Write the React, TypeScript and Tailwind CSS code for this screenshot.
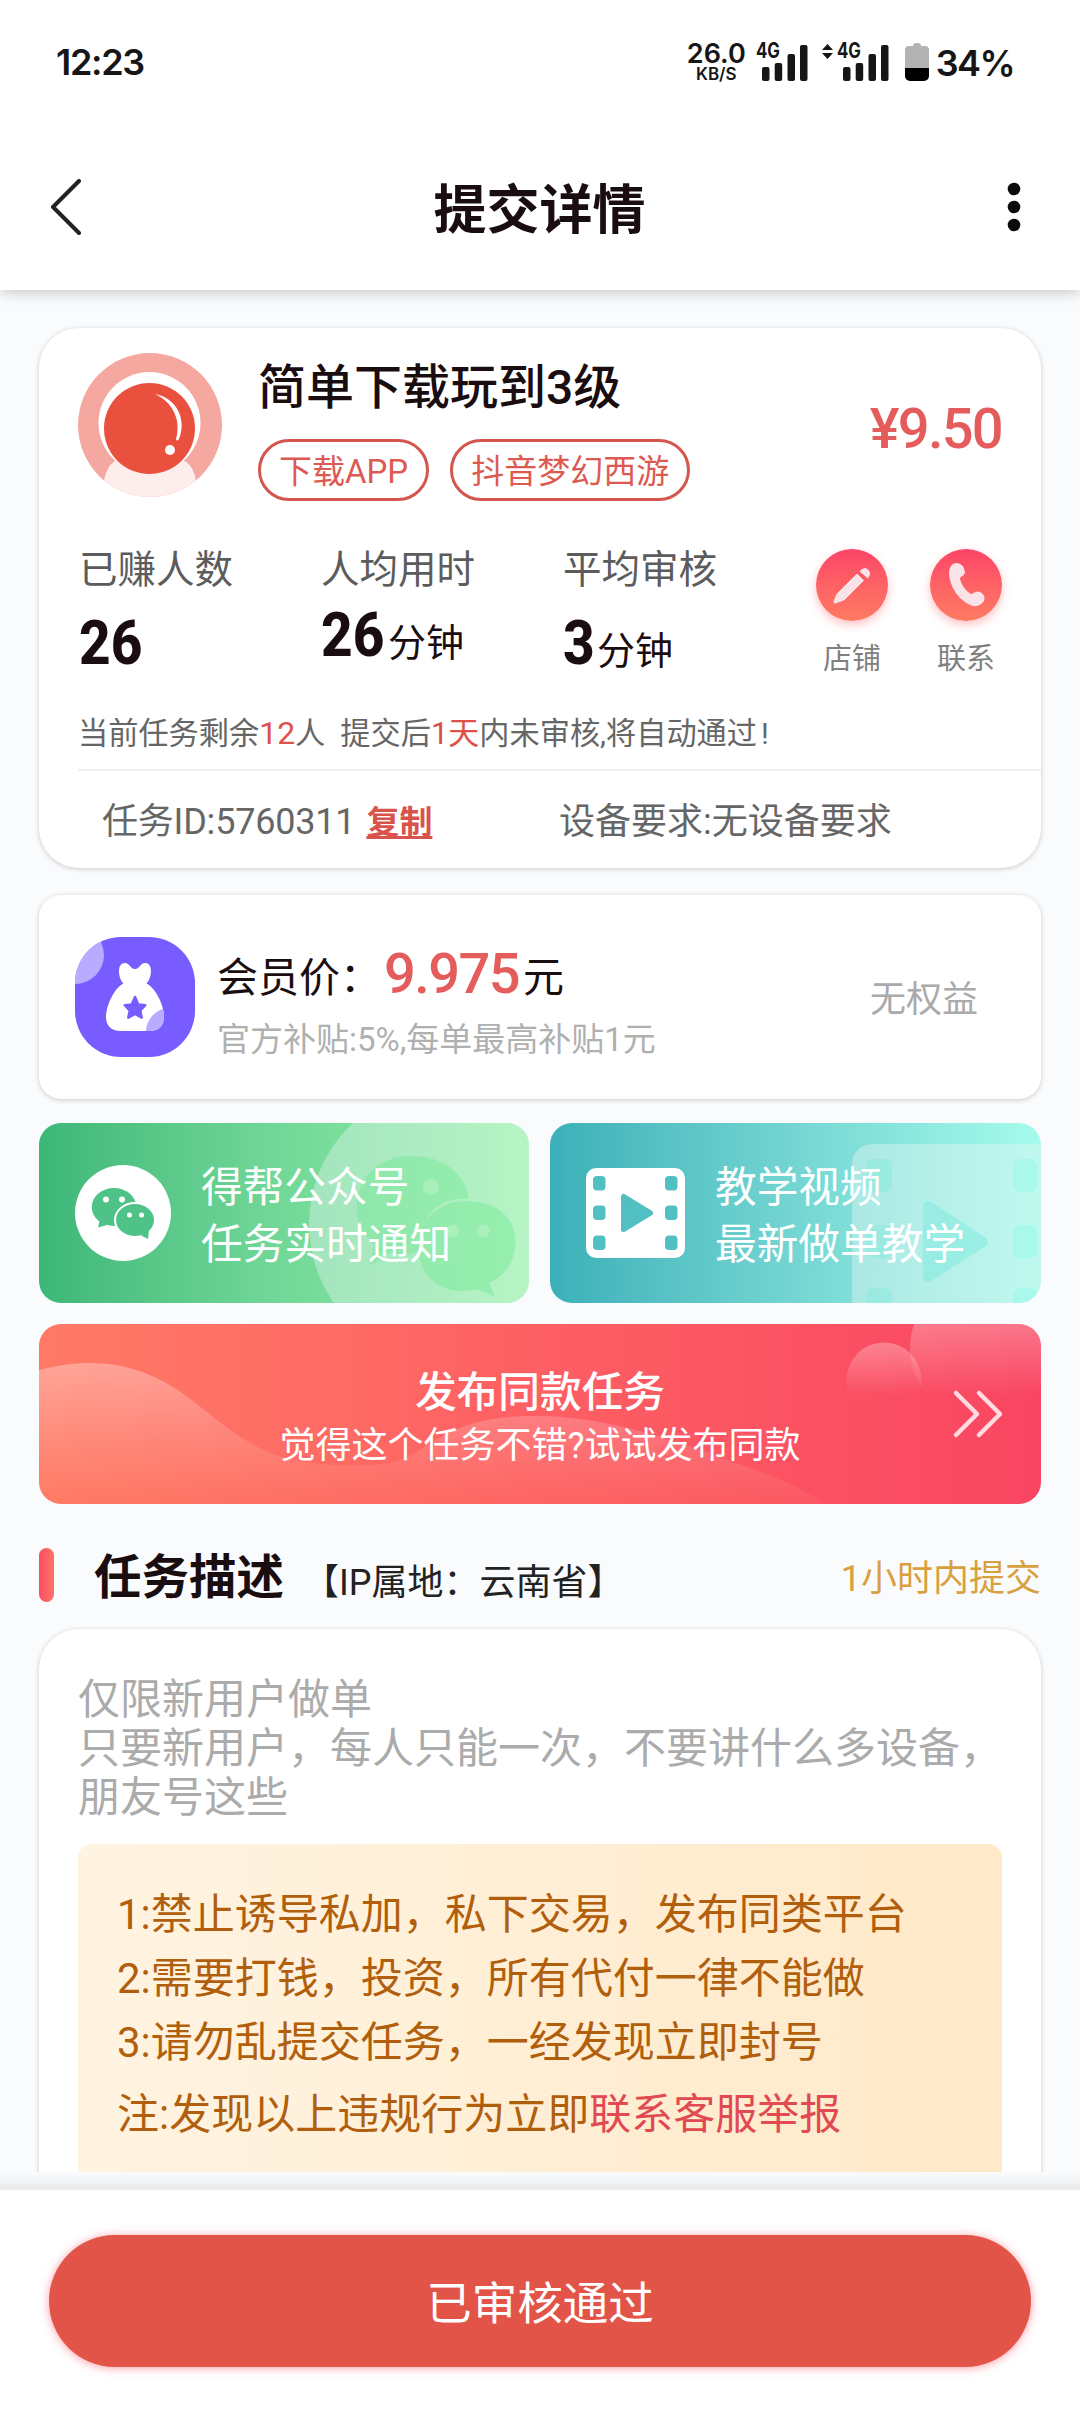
import type { ReactNode } from "react";

interface Stat {
  label: string;
  value: string;
  unit?: string;
  raised?: boolean;
}

const stats: Stat[] = [
  { label: "已赚人数", value: "26" },
  { label: "人均用时", value: "26", unit: "分钟", raised: true },
  { label: "平均审核", value: "3", unit: "分钟" },
];

const tags = ["下载APP", "抖音梦幻西游"];

const rules = [
  "1:禁止诱导私加，私下交易，发布同类平台",
  "2:需要打钱，投资，所有代付一律不能做",
  "3:请勿乱提交任务，一经发现立即封号",
];

function Signal() {
  return (
    <div className="relative h-[38px] w-[52px]">
      <span className="absolute -top-[1px] left-0 origin-left scale-x-[0.8] text-[21px] leading-[18px] font-bold">4G</span>
      <svg className="absolute right-0 bottom-0" width="46" height="37" fill="#161616">
        <rect x="0" y="23" width="7.5" height="14" rx="2" />
        <rect x="12.7" y="19" width="7.5" height="18" rx="2" />
        <rect x="25.5" y="10" width="7.5" height="27" rx="2" />
        <rect x="38" y="1" width="7.5" height="36" rx="2" />
      </svg>
    </div>
  );
}

function StatusBar() {
  return (
    <div className="flex h-[124px] items-center justify-between pl-[56px] pr-[66px] font-['Inter',sans-serif] text-[#161616]">
      <span className="text-[36px] font-semibold tracking-[-1.3px]">12:23</span>
      <div className="flex items-center">
        <div className="flex flex-col items-center font-semibold">
          <span className="text-[27px] leading-[25px]">26.0</span>
          <span className="text-[17px] leading-[17px]">KB/S</span>
        </div>
        <div className="ml-[10px]">
          <Signal />
        </div>
        <svg className="ml-[14px] mb-[22px]" width="11" height="15" fill="#161616">
          <path d="M5.5 0 11 6H0zM5.5 15 0 9h11z" />
        </svg>
        <div className="ml-[4px]">
          <Signal />
        </div>
        <svg className="ml-[16px]" width="24" height="38">
          <path d="M8 3a3 3 0 0 1 3-3h2a3 3 0 0 1 3 3h4a4 4 0 0 1 4 4v18H0V7a4 4 0 0 1 4-4z" fill="#b3b3b3" />
          <path d="M0 25h24v8a5 5 0 0 1-5 5H5a5 5 0 0 1-5-5z" fill="#000" />
        </svg>
        <span className="ml-[7px] pt-[2px] text-[36px] leading-[38px] font-semibold tracking-[-1.6px]">34%</span>
      </div>
    </div>
  );
}

function TitleBar() {
  return (
    <div className="flex h-[166px] items-center justify-between pl-[50px] pr-[59px]">
      <svg width="32" height="56" fill="none" stroke="#222" strokeWidth="4" strokeLinecap="round" strokeLinejoin="round">
        <path d="M29 2 3 28l26 26" />
      </svg>
      <h1 className="pt-[7px] pr-[10px] text-[53px] leading-[60px] font-bold text-[#1a0d10]">提交详情</h1>
      <svg width="14" height="50" fill="#0b0b0b">
        <circle cx="7" cy="7" r="6.3" />
        <circle cx="7" cy="25" r="6.3" />
        <circle cx="7" cy="43" r="6.3" />
      </svg>
    </div>
  );
}

function Avatar() {
  return (
    <svg width="144" height="144" viewBox="0 0 144 144">
      <defs>
        <clipPath id="avatar">
          <circle cx="72" cy="72" r="72" />
        </clipPath>
      </defs>
      <g clipPath="url(#avatar)">
        <rect width="144" height="144" fill="#f4a8a0" />
        <circle cx="71.5" cy="70" r="51" fill="#fff" />
        <path d="M37 108Q28 114 26 128v20h92v-20q-2-14-11-20z" fill="#fdeeec" />
        <circle cx="71.5" cy="75.5" r="45.5" fill="#e9503e" />
        <path d="M77 41C99 45 109 67 101 86Q99 89 98 86C103 68 96 50 77 41z" fill="#fff" />
        <circle cx="92" cy="97" r="5" fill="#fff" />
      </g>
    </svg>
  );
}

function RoundAction({ label, children }: { label: string; children: ReactNode }) {
  return (
    <div className="flex w-[114px] flex-col items-center">
      <div className="flex size-[72px] items-center justify-center rounded-full bg-linear-to-b from-[#fb4467] to-[#ff7a62] shadow-[0_4px_10px_rgba(251,80,90,0.35)]">
        {children}
      </div>
      <span className="mt-[22px] text-[29px] leading-[32px] text-[#808080]">{label}</span>
    </div>
  );
}

function TaskCard() {
  return (
    <section className="h-[540px] rounded-[40px] bg-white pt-[25px] shadow-[0_1px_5px_rgba(0,0,0,0.2)]">
      <div className="flex h-[148px] pl-[39px] pr-[39px]">
        <Avatar />
        <div className="ml-[36px] pt-[11px]">
          <h2 className="text-[48px] leading-[48px] font-medium text-[#1a0d10]">简单下载玩到3级</h2>
          <div className="mt-[27px] flex gap-[21px]">
            {tags.map((tag) => (
              <span key={tag} className="flex h-[62px] items-center rounded-full border-3 border-[#d5554f] px-[18px] pt-[3px] text-[33px] text-[#dc5a52]">
                {tag}
              </span>
            ))}
          </div>
        </div>
        <span className="ml-auto pt-[46px] text-[56px] leading-[60px] font-medium tracking-[-1.7px] text-[#e55c5c]">¥9.50</span>
      </div>

      <div className="mt-[48px] flex h-[140px] justify-between pl-[40px] pr-[18px]">
        <div className="grid grid-cols-[242px_242px_200px]">
          {stats.map((s) => (
            <div key={s.label} className="text-[#1a0d10]">
              <div className="text-[38.5px] leading-[42px] text-[#5c5c5c]">{s.label}</div>
              <div className={s.raised ? "mt-[14px] flex leading-[60px]" : "mt-[22px] flex leading-[60px]"}>
                <span className={s.value.length > 1 ? "w-[67px]" : "w-[34px]"}>
                  <span className="inline-block origin-left scale-x-[0.9] text-[61px] font-extrabold">{s.value}</span>
                </span>
                {s.unit && <span className="pt-[8px] text-[38px]">{s.unit}</span>}
              </div>
            </div>
          ))}
        </div>
        <div className="flex">
          <RoundAction label="店铺">
            <svg width="72" height="72" fill="#f9e3e8">
              <path d="M41 25 47.500 31.500 28 51 19.500 54Q17.500 54.500 18 52.500L21 45z" strokeLinejoin="round" stroke="#f9e3e8" strokeWidth="1" />
              <path d="M43.500 22.500Q48 16.500 52 20.500t0 9z" />
            </svg>
          </RoundAction>
          <RoundAction label="联系">
            <svg width="40" height="46" viewBox="0 0 40 46" fill="#f9e3e8">
              <path d="M3 10Q4 1 11 1q7 1 8 9c0 4-5 4-5 7 2 7 6 12 11 15 3 0 4-4 9-2q6 3 4 9-4 6-11 5C14 40 3 25 3 10z" />
            </svg>
          </RoundAction>
        </div>
      </div>

      <p className="mt-[26px] pl-[39px] text-[30.2px] leading-[36px] whitespace-pre text-[#666]">
        当前任务剩余<b className="text-[32px] font-normal text-[#dc5248]">12</b>人{"  "}提交后<b className="text-[31px] font-normal text-[#dc5248]">1天</b>内未审核,将自动通过<span className="pl-[4px]">!</span>
      </p>

      <div className="ml-[39px] mt-[17px] flex h-[98px] items-center border-t-2 border-[#f0f0f0] pt-[5px] pl-[24px] text-[36px] text-[#666]">
        <div className="w-[457px]">
          <span className="tracking-[-0.2px]">任务ID:5760311</span>
          <a className="ml-[11px] text-[33px] font-bold text-[#d9534a] underline decoration-3 underline-offset-2">复制</a>
        </div>
        <span>设备要求:无设备要求</span>
      </div>
    </section>
  );
}

function MoneyBag() {
  return (
    <svg width="120" height="120" viewBox="0 0 120 120">
      <defs>
        <clipPath id="bag-tile">
          <rect width="120" height="120" rx="46" />
        </clipPath>
        <clipPath id="bag">
          <path d="M50 46C40 49 31 68 31 80c0 9 6 14 14 14h30c8 0 14-5 14-14 0-12-9-31-19-34z" />
        </clipPath>
      </defs>
      <g clipPath="url(#bag-tile)">
        <rect width="120" height="120" fill="#785cff" />
        <circle cx="0" cy="18" r="29" fill="#b9abff" />
      </g>
      <path d="M50 48C43 43 41 26 50 26c5 0 5 6 10 6s5-6 10-6c9 0 7 17 0 22z" fill="#fff" />
      <g clipPath="url(#bag)">
        <rect x="30" y="44" width="60" height="52" fill="#fff" />
        <circle cx="95" cy="95" r="24" fill="#b9abff" />
      </g>
      <path d="m60 60 3.2 7.5 7 .7-5 5.400 1.500 7-6.700-3.700-6.700 3.700 1.500-7-5-5.400 7-.7z" fill="#785cff" stroke="#785cff" strokeWidth="2.500" strokeLinejoin="round" />
    </svg>
  );
}

function MemberCard() {
  return (
    <section className="mt-[27px] flex h-[204px] items-center rounded-[22px] bg-white pl-[36px] pr-[63px] shadow-[0_1px_5px_rgba(0,0,0,0.2)]">
      <MoneyBag />
      <div className="ml-[22px] flex flex-col pt-[9px]">
        <div className="flex h-[60px] items-center text-[41px] leading-[60px] text-[#1a0d10]">
          <span className="w-[167px] pt-[9px] whitespace-nowrap">会员价：</span>
          <span className="text-[56px] font-medium tracking-[-1.6px] text-[#e55c5c]">9.975</span>
          <span className="ml-[4px] pt-[9px]">元</span>
        </div>
        <span className="mt-[16px] text-[33px] leading-[40px] text-[#b0b0b0]">官方补贴:5%,每单最高补贴1元</span>
      </div>
      <span className="ml-auto pt-[5px] text-[36px] text-[#aaa]">无权益</span>
    </section>
  );
}

function WechatIcon() {
  return (
    <svg width="96" height="96">
      <circle cx="48" cy="48" r="48" fill="#fff" />
      <g fill="#4fc387">
        <ellipse cx="39" cy="42" rx="22.3" ry="19" />
        <path d="m25 54-2 8.500 11-3z" />
        <ellipse cx="60" cy="55" rx="20" ry="17" stroke="#fff" strokeWidth="2" />
        <path d="m74 65-1 9-7-3.500z" />
      </g>
      <g fill="#fff">
        <circle cx="31" cy="34.500" r="3" />
        <circle cx="47" cy="34.500" r="3" />
        <circle cx="54.500" cy="50" r="2.500" />
        <circle cx="66.500" cy="50" r="2.500" />
      </g>
    </svg>
  );
}

function WechatBanner() {
  return (
    <div className="relative flex h-[180px] w-[490px] items-center overflow-hidden rounded-[22px] bg-linear-to-r from-[#3cb778] via-[#6ed596] via-45% to-[#98f6a6] pl-[36px]">
      <svg className="absolute inset-0" width="490" height="180">
        <circle cx="408" cy="101" r="138" fill="#e6f2f4" opacity="0.4" />
        <g fill="#72e892" opacity="0.45">
          <path d="M372 33c34 0 54 18 58 43-32-2-50 18-48 50-6 6-18 7-31 4l-20 13 4-22c-36-34-13-88 37-88z" />
          <path d="M426 78c65 0 61 67 24 82l6 14-18-8c-35 9-59-13-59-42 0-26 20-46 47-46z" />
        </g>
        <g fill="#b4f2c4" opacity="0.7">
          <circle cx="392" cy="64" r="8" />
          <circle cx="414" cy="108" r="6.500" />
          <circle cx="444" cy="108" r="6.500" />
        </g>
      </svg>
      <div className="relative flex items-center">
        <WechatIcon />
        <div className="ml-[30px] pt-[6px] text-[41.7px] leading-[57px] text-white">
          <div>得帮公众号</div>
          <div>任务实时通知</div>
        </div>
      </div>
    </div>
  );
}

function VideoBanner() {
  return (
    <div className="relative flex h-[180px] w-[491px] items-center overflow-hidden rounded-[22px] bg-linear-to-r from-[#3bb0b9] to-[#a6fcec] pl-[36px]">
      <svg className="absolute inset-0" width="491" height="180">
        <rect x="302" y="21" width="220" height="200" rx="20" fill="#dff5f2" opacity="0.45" />
        <g fill="#7ceadd" opacity="0.4">
          <rect x="316" y="36" width="26" height="33" rx="7" />
          <rect x="316" y="102" width="26" height="33" rx="7" />
          <rect x="316" y="165" width="26" height="33" rx="7" />
        </g>
        <g fill="#96faea" opacity="0.55">
          <rect x="463" y="36" width="24" height="33" rx="7" />
          <rect x="463" y="102" width="24" height="33" rx="7" />
          <rect x="463" y="165" width="24" height="33" rx="7" />
        </g>
        <path d="M378 83v71l55-35z" fill="#7ceadd" stroke="#7ceadd" strokeWidth="10" strokeLinejoin="round" opacity="0.5" />
      </svg>
      <div className="relative flex items-center">
        <svg width="99" height="90" fill="#52bfc2">
          <rect width="99" height="90" rx="10" fill="#fff" />
          <rect x="7" y="8" width="12.500" height="14.500" rx="4" />
          <rect x="7" y="37.500" width="12.500" height="14.500" rx="4" />
          <rect x="7" y="67.500" width="12.500" height="14.500" rx="4" />
          <rect x="79" y="8" width="12.500" height="14.500" rx="4" />
          <rect x="79" y="37.500" width="12.500" height="14.500" rx="4" />
          <rect x="79" y="67.500" width="12.500" height="14.500" rx="4" />
          <path d="M37.500 28.500v33l27-16.500z" stroke="#52bfc2" strokeWidth="5" strokeLinejoin="round" />
        </svg>
        <div className="ml-[30px] pt-[6px] text-[41.7px] leading-[57px] text-white">
          <div>教学视频</div>
          <div>最新做单教学</div>
        </div>
      </div>
    </div>
  );
}

function PublishBanner() {
  return (
    <div className="relative mt-[21px] flex h-[180px] items-center justify-center overflow-hidden rounded-[22px] bg-linear-to-r from-[#ff7a66] via-[#fd5f63] via-50% to-[#f94562]">
      <svg className="absolute inset-0" width="1002" height="180">
        <defs>
          <linearGradient id="wave" x1="0" y1="40" x2="0" y2="178" gradientUnits="userSpaceOnUse">
            <stop offset="0" stopColor="#fff" stopOpacity="0.32" />
            <stop offset="0.4" stopColor="#fff" stopOpacity="0.18" />
            <stop offset="1" stopColor="#ff8060" stopOpacity="0.15" />
          </linearGradient>
          <linearGradient id="bubble" x1="0" y1="0" x2="0" y2="72" gradientUnits="userSpaceOnUse">
            <stop offset="0" stopColor="#fff" stopOpacity="0.26" />
            <stop offset="1" stopColor="#fff" stopOpacity="0" />
          </linearGradient>
          <linearGradient id="bubble-small" x1="0" y1="18" x2="0" y2="72" gradientUnits="userSpaceOnUse">
            <stop offset="0" stopColor="#fff" stopOpacity="0.3" />
            <stop offset="1" stopColor="#fff" stopOpacity="0" />
          </linearGradient>
        </defs>
        <path
          d="M0 46C60 30 108 42 150 74s73 66 147 67c38 1 62 1 87-17 35-24 64-32 113-32 70 0 140 25 184 41 40 15 75 26 105 47H0z"
          fill="url(#wave)"
        />
        <circle cx="845" cy="56" r="37.500" fill="url(#bubble-small)" />
        <circle cx="942" cy="24" r="71" fill="url(#bubble)" />
        <path d="m917 69 21 21-21 21M940 69l21 21-21 21" fill="none" stroke="#ffdbe0" strokeWidth="4.500" strokeLinecap="round" strokeLinejoin="round" />
      </svg>
      <div className="relative pt-[8px] text-center text-white">
        <div className="text-[41.7px] leading-[55px] font-medium">发布同款任务</div>
        <div className="text-[36px] leading-[52px]">觉得这个任务不错?试试发布同款</div>
      </div>
    </div>
  );
}

function Description() {
  return (
    <>
      <div className="mt-[44px] flex h-[54px] items-center">
        <span className="h-[54px] w-[15px] rounded-full bg-linear-to-r from-[#fb4b64] to-[#fd7466]" />
        <h2 className="ml-[40px] pt-[6px] text-[47.500px] leading-[54px] font-bold text-[#1a0d10]">任务描述</h2>
        <span className="ml-[19px] pt-[16px] text-[36px] leading-[54px] text-[#222]">【IP属地：云南省】</span>
        <span className="ml-auto pt-[8px] text-[36px] leading-[54px] text-[#d9a03f]">1小时内提交</span>
      </div>
      <section className="mt-[27px] h-[700px] rounded-[40px] bg-white px-[39px] pt-[46px] shadow-[0_1px_5px_rgba(0,0,0,0.2)]">
        <p className="text-[42px] leading-[49px] text-[#ababab]">
          仅限新用户做单
          <br />
          只要新用户，每人只能一次，不要讲什么多设备，
          <br />
          朋友号这些
        </p>
        <div className="mt-[22px] h-[450px] rounded-[14px] bg-linear-to-r from-[#fff4e2] to-[#ffe9c8] px-[39px] pt-[39px] text-[42px] leading-[64px] text-[#b15f0d]">
          {rules.map((rule) => (
            <p key={rule}>{rule}</p>
          ))}
          <p className="mt-[8px]">
            注:发现以上违规行为立即<span className="text-[#e04a50]">联系客服举报</span>
          </p>
        </div>
      </section>
    </>
  );
}

export default function App() {
  return (
    <div className="flex h-[2412px] w-[1080px] flex-col overflow-hidden bg-[#fafbfd] font-['Roboto','Noto_Sans_CJK_SC',sans-serif]">
      <header className="relative z-10 h-[290px] shrink-0 bg-white shadow-[0_2px_14px_rgba(0,0,0,0.22)]">
        <StatusBar />
        <TitleBar />
      </header>

      <main className="h-[1882px] shrink-0 overflow-hidden px-[39px] pt-[38px]">
        <TaskCard />
        <MemberCard />
        <div className="mt-[24px] flex justify-between">
          <WechatBanner />
          <VideoBanner />
        </div>
        <PublishBanner />
        <Description />
      </main>

      <div className="h-[12px] shrink-0 bg-linear-to-b from-[#fafbfc] to-[#f1f2f4]" />
      <div className="h-[6px] shrink-0 bg-[#ebecee]" />
      <footer className="flex-1 bg-white px-[49px] pt-[45px]">
        <button className="flex h-[132px] w-full items-center justify-center rounded-full bg-[#e25448] pt-[8px] text-[45.500px] text-white shadow-[0_1px_10px_rgba(251,60,80,0.5)]">
          已审核通过
        </button>
      </footer>
    </div>
  );
}
